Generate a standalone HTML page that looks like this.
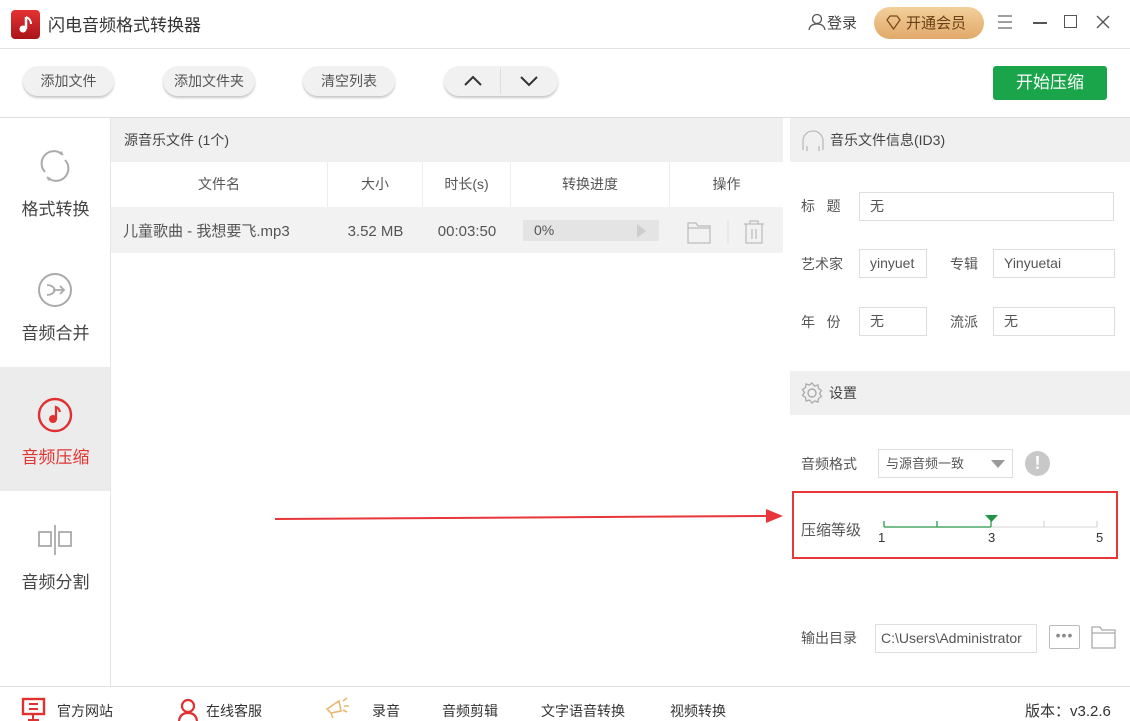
<!DOCTYPE html>
<html><head><meta charset="utf-8"><style>
*{margin:0;padding:0;box-sizing:border-box}
body{width:1130px;height:721px;overflow:hidden;background:#fff;font-family:"Liberation Sans","Noto Sans CJK SC",sans-serif;color:#333;position:relative;font-size:14px}
.a{position:absolute}
.btn{position:absolute;top:66px;height:30px;border-radius:15px;background:#f1f1f1;box-shadow:0 2px 2px #c8c8c8;font-size:14px;color:#555;text-align:center;line-height:30px}
.side{position:absolute;left:0;width:111px;text-align:center;font-size:17px;color:#444}
.hd{position:absolute;background:#f0f0f0;font-size:14px;color:#444;line-height:45px}
.col{position:absolute;top:162px;height:45px;line-height:45px;text-align:center;font-size:14px;color:#555;border-right:1px solid #eee}
.cell{position:absolute;top:209px;height:46px;line-height:46px;text-align:center;font-size:15px;color:#555}
.lbl{position:absolute;font-size:14px;color:#555}
.inp{position:absolute;height:29px;border:1px solid #ddd;font-size:14px;color:#555;line-height:27px;padding-left:10px;background:#fff}
.bot{position:absolute;top:701px;font-size:14px;color:#333}
</style></head><body>
<div class="a" style="left:11px;top:10px;width:29px;height:29px;border-radius:4px;background:linear-gradient(#e53333,#a8141a)"></div>
<svg class="a" style="left:11px;top:10px" width="29" height="29"><path d="M15 7v12" stroke="#fff" stroke-width="2.5"/><circle cx="12" cy="19" r="3.5" fill="#fff"/><path d="M15 7q5 2 5 7" stroke="#fff" stroke-width="2" fill="none"/></svg>
<div class="a" style="left:48px;top:11px;font-size:17px;color:#333">闪电音频格式转换器</div>
<svg class="a" style="left:808px;top:13px" width="18" height="18"><circle cx="9" cy="6" r="4.5" stroke="#555" fill="none" stroke-width="1.3"/><path d="M1 17q1-6 8-6t8 6" stroke="#555" fill="none" stroke-width="1.3"/></svg>
<div class="a" style="left:827px;top:12px;font-size:15px;color:#444">登录</div>
<div class="a" style="left:874px;top:7px;width:110px;height:32px;border-radius:16px;background:linear-gradient(#f3cf9a,#e0a96a)"></div>
<svg class="a" style="left:885px;top:15px" width="17" height="16"><path d="M2 5l3-4h7l3 4-6.5 9z" stroke="#7a4a1c" fill="none" stroke-width="1.3"/></svg>
<div class="a" style="left:906px;top:12px;font-size:15px;color:#6a4018">开通会员</div>
<svg class="a" style="left:997px;top:14px" width="16" height="16"><path d="M1 2h14M1 8h14M1 14h14" stroke="#666" stroke-width="1.2"/></svg>
<div class="a" style="left:1033px;top:22px;width:14px;height:1.5px;background:#555"></div>
<div class="a" style="left:1064px;top:15px;width:13px;height:13px;border:1.5px solid #555"></div>
<svg class="a" style="left:1095px;top:14px" width="16" height="16"><path d="M2 2l12 12M14 2L2 14" stroke="#555" stroke-width="1.4"/></svg>
<div class="a" style="left:0;top:48px;width:1130px;height:1px;background:#e2e2e2"></div>
<div class="btn" style="left:23px;width:91px">添加文件</div>
<div class="btn" style="left:163px;width:92px">添加文件夹</div>
<div class="btn" style="left:303px;width:92px">清空列表</div>
<div class="btn" style="left:444px;width:114px"></div>
<div class="a" style="left:500px;top:68px;width:1px;height:26px;background:#ddd"></div>
<svg class="a" style="left:462px;top:73px" width="80" height="16"><path d="M3 12l8-8 8 8M59 4l8 8 8-8" stroke="#333" stroke-width="2" fill="none"/></svg>
<div class="a" style="left:993px;top:66px;width:114px;height:34px;background:#1aa54a;border-radius:3px;color:#fff;font-size:17px;text-align:center;line-height:34px">开始压缩</div>
<div class="a" style="left:0;top:117px;width:1130px;height:1px;background:#ddd"></div>
<div class="a" style="left:110px;top:118px;width:1px;height:568px;background:#e5e5e5"></div>
<div class="a" style="left:0;top:367px;width:110px;height:124px;background:#ececec"></div>
<svg class="a" style="left:37px;top:148px" width="36" height="36"><path d="M8 24A12 12 0 0 1 26 7M28 12A12 12 0 0 1 10 29" stroke="#aaa" stroke-width="2" fill="none"/><path d="M26 7l-4-1 3-3z" fill="#aaa"/><path d="M10 29l4 1-3 3z" fill="#aaa"/></svg>
<div class="side" style="top:195px">格式转换</div>
<svg class="a" style="left:37px;top:272px" width="36" height="36"><circle cx="18" cy="18" r="16" stroke="#aaa" stroke-width="2" fill="none"/><path d="M10 13q6 0 8 5q-2 5-8 5M16 18h11M23 14l4 4-4 4" stroke="#aaa" stroke-width="1.8" fill="none"/></svg>
<div class="side" style="top:319px">音频合并</div>
<svg class="a" style="left:37px;top:397px" width="36" height="36"><circle cx="18" cy="18" r="16" stroke="#e03030" stroke-width="2.4" fill="none"/><circle cx="16" cy="22" r="4" fill="#e03030"/><path d="M19 22V10q3 1 4 5" stroke="#e03030" stroke-width="2.2" fill="none"/></svg>
<div class="side" style="top:443px;color:#e03434">音频压缩</div>
<svg class="a" style="left:37px;top:522px" width="36" height="36"><rect x="2" y="10" width="12" height="14" stroke="#aaa" stroke-width="1.8" fill="none"/><rect x="22" y="10" width="12" height="14" stroke="#aaa" stroke-width="1.8" fill="none"/><path d="M18 3v30" stroke="#aaa" stroke-width="1.8"/></svg>
<div class="side" style="top:568px">音频分割</div>
<div class="hd" style="left:111px;top:118px;width:672px;height:44px;padding-left:13px">源音乐文件 (1个)</div>
<div class="col" style="left:111px;width:217px">文件名</div>
<div class="col" style="left:328px;width:95px">大小</div>
<div class="col" style="left:423px;width:88px">时长(s)</div>
<div class="col" style="left:511px;width:159px">转换进度</div>
<div class="col" style="left:670px;width:113px;border:none">操作</div>
<div class="a" style="left:111px;top:207px;width:672px;height:46px;background:#f2f2f2"></div>
<div class="cell" style="left:111px;width:217px;text-align:left;padding-left:12px">儿童歌曲 - 我想要飞.mp3</div>
<div class="cell" style="left:328px;width:95px">3.52 MB</div>
<div class="cell" style="left:423px;width:88px">00:03:50</div>
<div class="a" style="left:523px;top:220px;width:136px;height:21px;background:#e4e4e4;font-size:14px;color:#555;line-height:21px;padding-left:11px">0%</div>
<div class="a" style="left:637px;top:224px;width:0;height:0;border-left:9px solid #ccc;border-top:7px solid transparent;border-bottom:7px solid transparent"></div>
<svg class="a" style="left:686px;top:219px" width="85" height="26"><path d="M2 4h8l2 3h12v17H2z M2 9h22" stroke="#bbb" stroke-width="1.2" fill="none"/><path d="M42 1v24" stroke="#ddd"/><path d="M58 5h20M64 5V2h8v3M60 5v19h16V5M66 10v10M70 10v10" stroke="#bbb" stroke-width="1.2" fill="none"/></svg>
<div class="hd" style="left:790px;top:118px;width:340px;height:44px;padding-left:40px">音乐文件信息(ID3)</div>
<svg class="a" style="left:800px;top:128px" width="26" height="26"><path d="M3 22V13a10 10 0 0 1 20 0v9M7 18v5M19 18v5" stroke="#bbb" stroke-width="1.3" fill="none"/></svg>
<div class="lbl" style="left:801px;top:196px">标&nbsp;&nbsp;&nbsp;题</div>
<div class="inp" style="left:859px;top:192px;width:255px">无</div>
<div class="lbl" style="left:801px;top:254px">艺术家</div>
<div class="inp" style="left:859px;top:249px;width:68px">yinyuet</div>
<div class="lbl" style="left:950px;top:254px">专辑</div>
<div class="inp" style="left:993px;top:249px;width:122px">Yinyuetai</div>
<div class="lbl" style="left:801px;top:312px">年&nbsp;&nbsp;&nbsp;份</div>
<div class="inp" style="left:859px;top:307px;width:68px">无</div>
<div class="lbl" style="left:950px;top:312px">流派</div>
<div class="inp" style="left:993px;top:307px;width:122px">无</div>
<div class="hd" style="left:790px;top:371px;width:340px;height:44px;padding-left:39px">设置</div>
<svg class="a" style="left:800px;top:381px" width="24" height="24"><circle cx="12" cy="12" r="4" stroke="#aaa" stroke-width="1.4" fill="none"/><path d="M12 2l2.5 3 3.5-1 .5 3.5 3 2-2 3 2 3-3 2-.5 3.5-3.5-1L12 22l-2.5-3-3.5 1-.5-3.5-3-2 2-3-2-3 3-2 .5-3.5 3.5 1z" stroke="#aaa" stroke-width="1.3" fill="none"/></svg>
<div class="lbl" style="left:801px;top:454px">音频格式</div>
<div class="inp" style="left:878px;top:449px;width:135px;font-size:13px;padding-left:7px">与源音频一致</div>
<div class="a" style="left:991px;top:460px;border-top:8px solid #999;border-left:7px solid transparent;border-right:7px solid transparent"></div>
<div class="a" style="left:1025px;top:451px;width:25px;height:25px;border-radius:50%;background:#c8c8c8;color:#fff;font-weight:bold;text-align:center;line-height:25px;font-size:18px">!</div>
<div class="lbl" style="left:801px;top:519px;font-size:15px">压缩等级</div>
<svg class="a" style="left:878px;top:510px" width="230" height="40"><path d="M6 17h213" stroke="#ddd" stroke-width="1.2"/><path d="M6 17h107M6 11v6M59 11v6M113 11v6" stroke="#2e9a50" stroke-width="1.3" fill="none"/><path d="M166 11v6M219 11v6" stroke="#ccc"/><path d="M107 5h13l-6.5 7z" fill="#1f9444"/><text x="0" y="32" font-size="13" fill="#333" font-family="Liberation Sans">1</text><text x="110" y="32" font-size="13" fill="#333" font-family="Liberation Sans">3</text><text x="218" y="32" font-size="13" fill="#333" font-family="Liberation Sans">5</text></svg>
<div class="a" style="left:792px;top:491px;width:326px;height:68px;border:2px solid #e8363a"></div>
<svg class="a" style="left:270px;top:505px" width="520" height="24"><path d="M5 14L498 11" stroke="#e8363a" stroke-width="2"/><path d="M496 4l17 7-17 7z" fill="#e8363a"/></svg>
<div class="lbl" style="left:801px;top:628px">输出目录</div>
<div class="inp" style="left:875px;top:624px;width:162px;padding-left:5px">C:\Users\Administrator</div>
<div class="a" style="left:1049px;top:625px;width:31px;height:24px;border:1px solid #bbb;border-radius:2px;text-align:center;line-height:18px;color:#888;font-size:14px;letter-spacing:1px">•••</div>
<svg class="a" style="left:1091px;top:625px" width="26" height="24"><path d="M1 2h8l2 3h13v18H1z M1 8h23" stroke="#aaa" stroke-width="1.3" fill="none"/></svg>
<div class="a" style="left:0;top:686px;width:1130px;height:1px;background:#e2e2e2"></div>
<svg class="a" style="left:21px;top:697px" width="26" height="24"><rect x="2" y="2" width="21" height="15" stroke="#e03030" stroke-width="2.4" fill="none"/><path d="M8 7h9M8 12h9M12 17v5M7 23h11" stroke="#e03030" stroke-width="2"/></svg>
<div class="bot" style="left:57px">官方网站</div>
<svg class="a" style="left:177px;top:698px" width="22" height="23"><circle cx="11" cy="8" r="6" stroke="#e03030" stroke-width="2.2" fill="none"/><path d="M2 23q1-8 9-8t9 8" stroke="#e03030" stroke-width="2.2" fill="none"/></svg>
<div class="bot" style="left:206px">在线客服</div>
<svg class="a" style="left:323px;top:695px" width="30" height="24"><path d="M4 14l12-8 2 10-10 2zM8 18l2 5M20 6l4-3M21 11h5M20 15l4 2" stroke="#e8b870" stroke-width="1.6" fill="none"/></svg>
<div class="bot" style="left:372px">录音</div>
<div class="bot" style="left:442px">音频剪辑</div>
<div class="bot" style="left:541px">文字语音转换</div>
<div class="bot" style="left:670px">视频转换</div>
<div class="bot" style="left:1025px;font-size:15px;top:700px">版本：v3.2.6</div>
</body></html>
